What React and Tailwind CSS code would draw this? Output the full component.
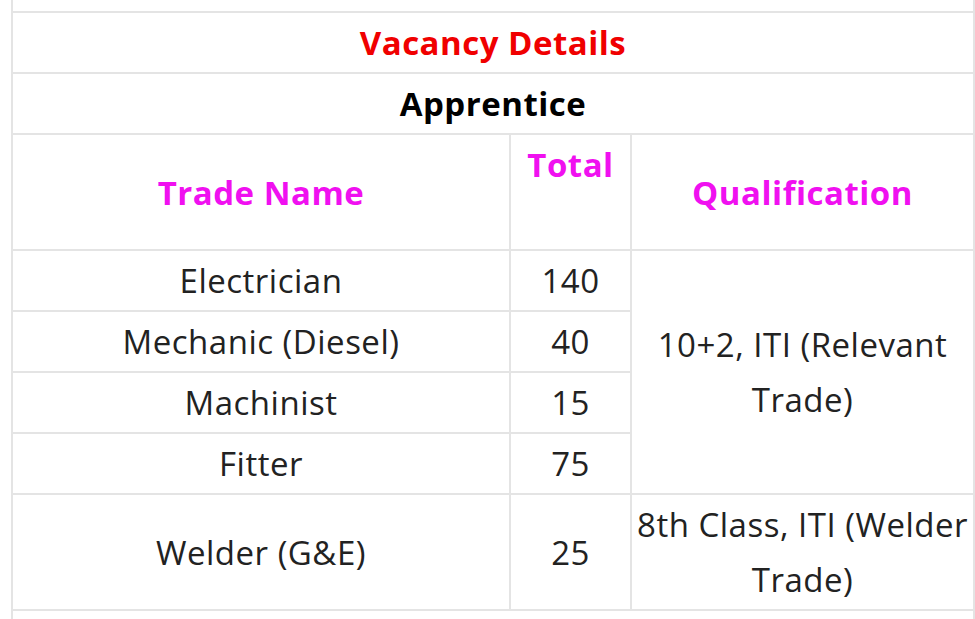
export default function App() {
  const rows = [
    { name: 'Electrician', total: '140' },
    { name: 'Mechanic (Diesel)', total: '40' },
    { name: 'Machinist', total: '15' },
    { name: 'Fitter', total: '75' },
  ];
  const cell = 'border-2 border-[#e4e4e4] px-[3px] py-[2px] text-center align-middle';

  return (
    <div
      className="w-[975px] h-[619px] overflow-hidden bg-white pl-[11px]"
      style={{ fontFamily: '"Open Sans", "Noto Sans", sans-serif' }}
    >
      <table className="-mt-[40px] w-[962px] table-fixed border-collapse text-[33px] leading-[55px] tracking-[0.5px] text-[#222]">
        <colgroup>
          <col className="w-[498px]" />
          <col className="w-[121px]" />
          <col className="w-[343px]" />
        </colgroup>
        <tbody>
          <tr>
            <td colSpan={3} className={`${cell} h-[51px]`} />
          </tr>
          <tr>
            <td colSpan={3} className={`${cell} font-bold text-[#f00000]`}>
              Vacancy Details
            </td>
          </tr>
          <tr>
            <td colSpan={3} className={`${cell} font-bold text-black`}>
              Apprentice
            </td>
          </tr>
          <tr className="font-bold text-[#f010f0]">
            <td className={cell}>Trade Name</td>
            <td className={cell}>
              Total
              <br />
              &nbsp;
            </td>
            <td className={cell}>Qualification</td>
          </tr>
          {rows.map((r, i) => (
            <tr key={r.name}>
              <td className={cell}>{r.name}</td>
              <td className={cell}>{r.total}</td>
              {i === 0 && (
                <td rowSpan={4} className={cell}>
                  10+2, ITI (Relevant Trade)
                </td>
              )}
            </tr>
          ))}
          <tr>
            <td className={cell}>Welder (G&amp;E)</td>
            <td className={cell}>25</td>
            <td className={cell}>8th Class, ITI (Welder Trade)</td>
          </tr>
          <tr>
            <td colSpan={3} className={`${cell} h-[61px]`} />
          </tr>
        </tbody>
      </table>
    </div>
  );
}
